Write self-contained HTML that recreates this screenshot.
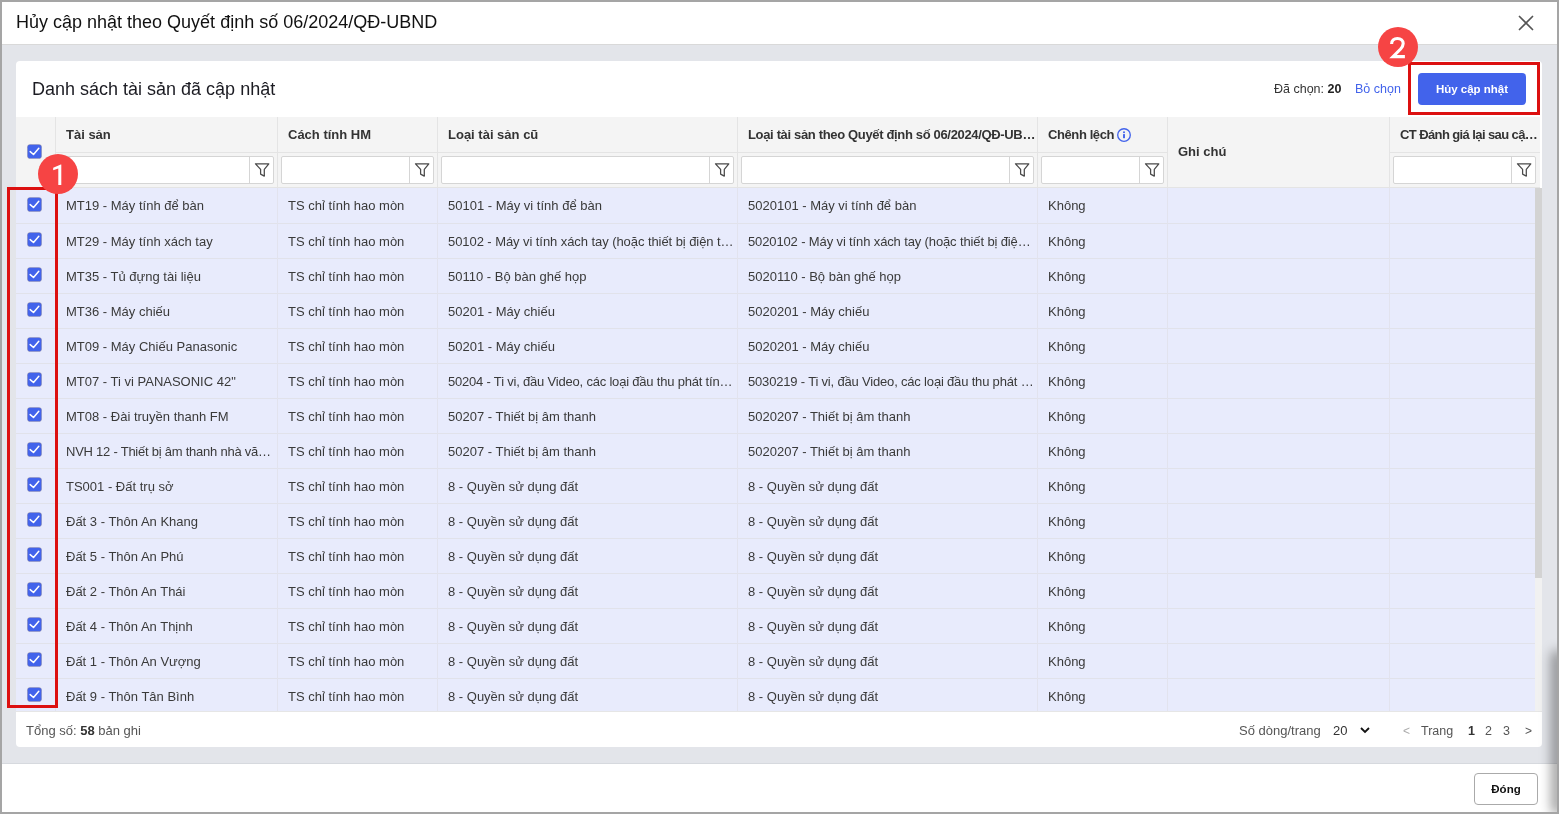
<!DOCTYPE html><html><head><meta charset="utf-8"><style>
*{box-sizing:border-box;margin:0;padding:0}
html,body{width:1559px;height:814px;overflow:hidden}
body{background:#a5a5a5;font-family:"Liberation Sans",sans-serif;position:relative;color:#333}
.a{position:absolute}
#dlg{left:2px;top:2px;width:1555px;height:810px;background:#fff}
#gray{left:2px;top:44px;width:1555px;height:720px;background:#e3e5ea;border-top:1px solid #d9d9d9;border-bottom:1px solid #d6d9de}
.title{left:16px;top:10px;font-size:18px;color:#111;white-space:nowrap;line-height:24px}
#card{left:16px;top:61px;width:1526px;height:686px;background:#fff;border-radius:4px;overflow:hidden}
.ct{font-size:18px;color:#1b1b22;white-space:nowrap;line-height:24px}
.hd{background:#f4f4f4}
.vl{width:1px;background:#e4e4e4}
.hl{height:1px;background:#e4e4e4}
.th{font-size:13px;font-weight:bold;color:#333;white-space:nowrap;line-height:16px}
.inp{height:28px;background:#fff;border:1px solid #d5d5d5;border-radius:2px}
.inp .sep{position:absolute;top:0;bottom:0;width:1px;background:#d5d5d5}
.inp svg{position:absolute;top:3px}
.row{left:16px;width:1519px;height:35px;background:#e8ebfc;border-bottom:1px solid #e1e2ea}
.td{font-size:13px;color:#3a3a3a;white-space:nowrap;line-height:16px}
.cb{width:15px;height:15px}
.ft{font-size:13px;color:#555;white-space:nowrap;line-height:16px}
</style></head><body><div style="position:absolute;left:0;top:0;width:1559px;height:814px;will-change:transform"><div class="a" id="dlg"></div>
<div class="a title">Hủy cập nhật theo Quyết định số 06/2024/QĐ-UBND</div>
<svg class="a" style="left:1518px;top:15px" width="16" height="16" viewBox="0 0 16 16"><path d="M1.5 1.5 L14.5 14.5 M14.5 1.5 L1.5 14.5" stroke="#555" stroke-width="1.7" stroke-linecap="round"/></svg>
<div class="a" id="gray"></div>
<div class="a" id="card"></div>
<div class="a ct" style="left:32px;top:77px">Danh sách tài sản đã cập nhật</div>
<div class="a" style="left:1274px;top:81px;font-size:12.5px;color:#333;white-space:nowrap;line-height:16px">Đã chọn: <b style="color:#222">20</b></div>
<div class="a" style="left:1355px;top:81px;font-size:12.5px;color:#4263eb;white-space:nowrap;line-height:16px">Bỏ chọn</div>
<div class="a" style="left:1418px;top:73px;width:108px;height:32px;background:#4263eb;border-radius:4px;color:#fff;font-size:11.5px;font-weight:bold;text-align:center;line-height:32px;white-space:nowrap">Hủy cập nhật</div>
<div class="a hd" style="left:16px;top:117px;width:1524px;height:71px"></div>
<div class="a hl" style="left:56px;top:152px;width:1111px"></div>
<div class="a hl" style="left:1389px;top:152px;width:151px"></div>
<div class="a hl" style="left:16px;top:187px;width:1524px"></div>
<div class="a vl" style="left:55px;top:117px;height:71px"></div>
<div class="a vl" style="left:277px;top:117px;height:71px"></div>
<div class="a vl" style="left:437px;top:117px;height:71px"></div>
<div class="a vl" style="left:737px;top:117px;height:71px"></div>
<div class="a vl" style="left:1037px;top:117px;height:71px"></div>
<div class="a vl" style="left:1167px;top:117px;height:71px"></div>
<div class="a vl" style="left:1389px;top:117px;height:71px"></div>
<div class="a th" style="left:66px;top:127px;">Tài sản</div>
<div class="a inp" style="left:59px;top:156px;width:215px"><div class="sep" style="left:189px"></div><svg style="left:194px" width="18" height="18" viewBox="0 0 18 18"><path d="M1.5 3.8 L14.8 3.8 L10.3 9.4 L10.3 16.1 L6.6 14.1 L6.6 9.4 Z" fill="none" stroke="#4a4a4a" stroke-width="1.25" stroke-linejoin="round"/></svg></div>
<div class="a th" style="left:288px;top:127px;">Cách tính HM</div>
<div class="a inp" style="left:281px;top:156px;width:153px"><div class="sep" style="left:127px"></div><svg style="left:132px" width="18" height="18" viewBox="0 0 18 18"><path d="M1.5 3.8 L14.8 3.8 L10.3 9.4 L10.3 16.1 L6.6 14.1 L6.6 9.4 Z" fill="none" stroke="#4a4a4a" stroke-width="1.25" stroke-linejoin="round"/></svg></div>
<div class="a th" style="left:448px;top:127px;">Loại tài sản cũ</div>
<div class="a inp" style="left:441px;top:156px;width:293px"><div class="sep" style="left:267px"></div><svg style="left:272px" width="18" height="18" viewBox="0 0 18 18"><path d="M1.5 3.8 L14.8 3.8 L10.3 9.4 L10.3 16.1 L6.6 14.1 L6.6 9.4 Z" fill="none" stroke="#4a4a4a" stroke-width="1.25" stroke-linejoin="round"/></svg></div>
<div class="a th" style="left:748px;top:127px;letter-spacing:-0.34px;">Loại tài sản theo Quyết định số 06/2024/QĐ-UB…</div>
<div class="a inp" style="left:741px;top:156px;width:293px"><div class="sep" style="left:267px"></div><svg style="left:272px" width="18" height="18" viewBox="0 0 18 18"><path d="M1.5 3.8 L14.8 3.8 L10.3 9.4 L10.3 16.1 L6.6 14.1 L6.6 9.4 Z" fill="none" stroke="#4a4a4a" stroke-width="1.25" stroke-linejoin="round"/></svg></div>
<svg class="a" style="left:1117px;top:128px" width="14" height="14" viewBox="0 0 14 14"><circle cx="7" cy="7" r="6.3" fill="none" stroke="#4263eb" stroke-width="1.35"/><rect x="6.05" y="6.1" width="1.9" height="4.1" fill="#4263eb"/><circle cx="7" cy="4.3" r="1" fill="#4263eb"/></svg>
<div class="a th" style="left:1048px;top:127px;letter-spacing:-0.4px;">Chênh lệch</div>
<div class="a inp" style="left:1041px;top:156px;width:123px"><div class="sep" style="left:97px"></div><svg style="left:102px" width="18" height="18" viewBox="0 0 18 18"><path d="M1.5 3.8 L14.8 3.8 L10.3 9.4 L10.3 16.1 L6.6 14.1 L6.6 9.4 Z" fill="none" stroke="#4a4a4a" stroke-width="1.25" stroke-linejoin="round"/></svg></div>
<div class="a th" style="left:1178px;top:144px">Ghi chú</div>
<div class="a th" style="left:1400px;top:127px;letter-spacing:-0.6px;">CT Đánh giá lại sau cậ…</div>
<div class="a inp" style="left:1393px;top:156px;width:143px"><div class="sep" style="left:117px"></div><svg style="left:122px" width="18" height="18" viewBox="0 0 18 18"><path d="M1.5 3.8 L14.8 3.8 L10.3 9.4 L10.3 16.1 L6.6 14.1 L6.6 9.4 Z" fill="none" stroke="#4a4a4a" stroke-width="1.25" stroke-linejoin="round"/></svg></div>
<div class="a cb" style="left:27px;top:144px"><svg width="15" height="15" viewBox="0 0 15 15"><rect x="0.4" y="0.4" width="14.2" height="14.2" rx="2.8" fill="#4263eb" stroke="#9a8a80" stroke-width="0.8" stroke-opacity="0.45"/><path d="M3.2 7.6 L6.5 10.5 L11.8 4.3" fill="none" stroke="#fff" stroke-width="1.5" stroke-linecap="round" stroke-linejoin="round"/></svg></div>
<div class="a" style="left:0;top:188px;width:1559px;height:523px;overflow:hidden">
<div class="a" style="left:16px;top:0;width:1519px;height:1px;background:#e8ebfc"></div>
<div class="a row" style="top:1px"></div>
<div class="a cb" style="left:27px;top:9px"><svg width="15" height="15" viewBox="0 0 15 15"><rect x="0.4" y="0.4" width="14.2" height="14.2" rx="2.8" fill="#4263eb" stroke="#9a8a80" stroke-width="0.8" stroke-opacity="0.45"/><path d="M3.2 7.6 L6.5 10.5 L11.8 4.3" fill="none" stroke="#fff" stroke-width="1.5" stroke-linecap="round" stroke-linejoin="round"/></svg></div>
<div class="a td" style="left:66px;top:10px;">MT19 - Máy tính để bàn</div>
<div class="a td" style="left:288px;top:10px;">TS chỉ tính hao mòn</div>
<div class="a td" style="left:448px;top:10px;">50101 - Máy vi tính để bàn</div>
<div class="a td" style="left:748px;top:10px;">5020101 - Máy vi tính để bàn</div>
<div class="a td" style="left:1048px;top:10px;">Không</div>
<div class="a row" style="top:36px"></div>
<div class="a cb" style="left:27px;top:44px"><svg width="15" height="15" viewBox="0 0 15 15"><rect x="0.4" y="0.4" width="14.2" height="14.2" rx="2.8" fill="#4263eb" stroke="#9a8a80" stroke-width="0.8" stroke-opacity="0.45"/><path d="M3.2 7.6 L6.5 10.5 L11.8 4.3" fill="none" stroke="#fff" stroke-width="1.5" stroke-linecap="round" stroke-linejoin="round"/></svg></div>
<div class="a td" style="left:66px;top:46px;">MT29 - Máy tính xách tay</div>
<div class="a td" style="left:288px;top:46px;">TS chỉ tính hao mòn</div>
<div class="a td" style="left:448px;top:46px;letter-spacing:-0.07px;">50102 - Máy vi tính xách tay (hoặc thiết bị điện t…</div>
<div class="a td" style="left:748px;top:46px;letter-spacing:-0.13px;">5020102 - Máy vi tính xách tay (hoặc thiết bị điệ…</div>
<div class="a td" style="left:1048px;top:46px;">Không</div>
<div class="a row" style="top:71px"></div>
<div class="a cb" style="left:27px;top:79px"><svg width="15" height="15" viewBox="0 0 15 15"><rect x="0.4" y="0.4" width="14.2" height="14.2" rx="2.8" fill="#4263eb" stroke="#9a8a80" stroke-width="0.8" stroke-opacity="0.45"/><path d="M3.2 7.6 L6.5 10.5 L11.8 4.3" fill="none" stroke="#fff" stroke-width="1.5" stroke-linecap="round" stroke-linejoin="round"/></svg></div>
<div class="a td" style="left:66px;top:81px;">MT35 - Tủ đựng tài liệu</div>
<div class="a td" style="left:288px;top:81px;">TS chỉ tính hao mòn</div>
<div class="a td" style="left:448px;top:81px;">50110 - Bộ bàn ghế họp</div>
<div class="a td" style="left:748px;top:81px;">5020110 - Bộ bàn ghế họp</div>
<div class="a td" style="left:1048px;top:81px;">Không</div>
<div class="a row" style="top:106px"></div>
<div class="a cb" style="left:27px;top:114px"><svg width="15" height="15" viewBox="0 0 15 15"><rect x="0.4" y="0.4" width="14.2" height="14.2" rx="2.8" fill="#4263eb" stroke="#9a8a80" stroke-width="0.8" stroke-opacity="0.45"/><path d="M3.2 7.6 L6.5 10.5 L11.8 4.3" fill="none" stroke="#fff" stroke-width="1.5" stroke-linecap="round" stroke-linejoin="round"/></svg></div>
<div class="a td" style="left:66px;top:116px;">MT36 - Máy chiếu</div>
<div class="a td" style="left:288px;top:116px;">TS chỉ tính hao mòn</div>
<div class="a td" style="left:448px;top:116px;">50201 - Máy chiếu</div>
<div class="a td" style="left:748px;top:116px;">5020201 - Máy chiếu</div>
<div class="a td" style="left:1048px;top:116px;">Không</div>
<div class="a row" style="top:141px"></div>
<div class="a cb" style="left:27px;top:149px"><svg width="15" height="15" viewBox="0 0 15 15"><rect x="0.4" y="0.4" width="14.2" height="14.2" rx="2.8" fill="#4263eb" stroke="#9a8a80" stroke-width="0.8" stroke-opacity="0.45"/><path d="M3.2 7.6 L6.5 10.5 L11.8 4.3" fill="none" stroke="#fff" stroke-width="1.5" stroke-linecap="round" stroke-linejoin="round"/></svg></div>
<div class="a td" style="left:66px;top:151px;">MT09 - Máy Chiếu Panasonic</div>
<div class="a td" style="left:288px;top:151px;">TS chỉ tính hao mòn</div>
<div class="a td" style="left:448px;top:151px;">50201 - Máy chiếu</div>
<div class="a td" style="left:748px;top:151px;">5020201 - Máy chiếu</div>
<div class="a td" style="left:1048px;top:151px;">Không</div>
<div class="a row" style="top:176px"></div>
<div class="a cb" style="left:27px;top:184px"><svg width="15" height="15" viewBox="0 0 15 15"><rect x="0.4" y="0.4" width="14.2" height="14.2" rx="2.8" fill="#4263eb" stroke="#9a8a80" stroke-width="0.8" stroke-opacity="0.45"/><path d="M3.2 7.6 L6.5 10.5 L11.8 4.3" fill="none" stroke="#fff" stroke-width="1.5" stroke-linecap="round" stroke-linejoin="round"/></svg></div>
<div class="a td" style="left:66px;top:186px;">MT07 - Ti vi PANASONIC 42"</div>
<div class="a td" style="left:288px;top:186px;">TS chỉ tính hao mòn</div>
<div class="a td" style="left:448px;top:186px;letter-spacing:-0.2px;">50204 - Ti vi, đầu Video, các loại đầu thu phát tín…</div>
<div class="a td" style="left:748px;top:186px;letter-spacing:-0.18px;">5030219 - Ti vi, đầu Video, các loại đầu thu phát …</div>
<div class="a td" style="left:1048px;top:186px;">Không</div>
<div class="a row" style="top:211px"></div>
<div class="a cb" style="left:27px;top:219px"><svg width="15" height="15" viewBox="0 0 15 15"><rect x="0.4" y="0.4" width="14.2" height="14.2" rx="2.8" fill="#4263eb" stroke="#9a8a80" stroke-width="0.8" stroke-opacity="0.45"/><path d="M3.2 7.6 L6.5 10.5 L11.8 4.3" fill="none" stroke="#fff" stroke-width="1.5" stroke-linecap="round" stroke-linejoin="round"/></svg></div>
<div class="a td" style="left:66px;top:221px;">MT08 - Đài truyền thanh FM</div>
<div class="a td" style="left:288px;top:221px;">TS chỉ tính hao mòn</div>
<div class="a td" style="left:448px;top:221px;">50207 - Thiết bị âm thanh</div>
<div class="a td" style="left:748px;top:221px;">5020207 - Thiết bị âm thanh</div>
<div class="a td" style="left:1048px;top:221px;">Không</div>
<div class="a row" style="top:246px"></div>
<div class="a cb" style="left:27px;top:254px"><svg width="15" height="15" viewBox="0 0 15 15"><rect x="0.4" y="0.4" width="14.2" height="14.2" rx="2.8" fill="#4263eb" stroke="#9a8a80" stroke-width="0.8" stroke-opacity="0.45"/><path d="M3.2 7.6 L6.5 10.5 L11.8 4.3" fill="none" stroke="#fff" stroke-width="1.5" stroke-linecap="round" stroke-linejoin="round"/></svg></div>
<div class="a td" style="left:66px;top:256px;letter-spacing:-0.24px;">NVH 12 - Thiết bị âm thanh nhà vă…</div>
<div class="a td" style="left:288px;top:256px;">TS chỉ tính hao mòn</div>
<div class="a td" style="left:448px;top:256px;">50207 - Thiết bị âm thanh</div>
<div class="a td" style="left:748px;top:256px;">5020207 - Thiết bị âm thanh</div>
<div class="a td" style="left:1048px;top:256px;">Không</div>
<div class="a row" style="top:281px"></div>
<div class="a cb" style="left:27px;top:289px"><svg width="15" height="15" viewBox="0 0 15 15"><rect x="0.4" y="0.4" width="14.2" height="14.2" rx="2.8" fill="#4263eb" stroke="#9a8a80" stroke-width="0.8" stroke-opacity="0.45"/><path d="M3.2 7.6 L6.5 10.5 L11.8 4.3" fill="none" stroke="#fff" stroke-width="1.5" stroke-linecap="round" stroke-linejoin="round"/></svg></div>
<div class="a td" style="left:66px;top:291px;">TS001 - Đất trụ sở</div>
<div class="a td" style="left:288px;top:291px;">TS chỉ tính hao mòn</div>
<div class="a td" style="left:448px;top:291px;">8 - Quyền sử dụng đất</div>
<div class="a td" style="left:748px;top:291px;">8 - Quyền sử dụng đất</div>
<div class="a td" style="left:1048px;top:291px;">Không</div>
<div class="a row" style="top:316px"></div>
<div class="a cb" style="left:27px;top:324px"><svg width="15" height="15" viewBox="0 0 15 15"><rect x="0.4" y="0.4" width="14.2" height="14.2" rx="2.8" fill="#4263eb" stroke="#9a8a80" stroke-width="0.8" stroke-opacity="0.45"/><path d="M3.2 7.6 L6.5 10.5 L11.8 4.3" fill="none" stroke="#fff" stroke-width="1.5" stroke-linecap="round" stroke-linejoin="round"/></svg></div>
<div class="a td" style="left:66px;top:326px;">Đất 3 - Thôn An Khang</div>
<div class="a td" style="left:288px;top:326px;">TS chỉ tính hao mòn</div>
<div class="a td" style="left:448px;top:326px;">8 - Quyền sử dụng đất</div>
<div class="a td" style="left:748px;top:326px;">8 - Quyền sử dụng đất</div>
<div class="a td" style="left:1048px;top:326px;">Không</div>
<div class="a row" style="top:351px"></div>
<div class="a cb" style="left:27px;top:359px"><svg width="15" height="15" viewBox="0 0 15 15"><rect x="0.4" y="0.4" width="14.2" height="14.2" rx="2.8" fill="#4263eb" stroke="#9a8a80" stroke-width="0.8" stroke-opacity="0.45"/><path d="M3.2 7.6 L6.5 10.5 L11.8 4.3" fill="none" stroke="#fff" stroke-width="1.5" stroke-linecap="round" stroke-linejoin="round"/></svg></div>
<div class="a td" style="left:66px;top:361px;">Đất 5 - Thôn An Phú</div>
<div class="a td" style="left:288px;top:361px;">TS chỉ tính hao mòn</div>
<div class="a td" style="left:448px;top:361px;">8 - Quyền sử dụng đất</div>
<div class="a td" style="left:748px;top:361px;">8 - Quyền sử dụng đất</div>
<div class="a td" style="left:1048px;top:361px;">Không</div>
<div class="a row" style="top:386px"></div>
<div class="a cb" style="left:27px;top:394px"><svg width="15" height="15" viewBox="0 0 15 15"><rect x="0.4" y="0.4" width="14.2" height="14.2" rx="2.8" fill="#4263eb" stroke="#9a8a80" stroke-width="0.8" stroke-opacity="0.45"/><path d="M3.2 7.6 L6.5 10.5 L11.8 4.3" fill="none" stroke="#fff" stroke-width="1.5" stroke-linecap="round" stroke-linejoin="round"/></svg></div>
<div class="a td" style="left:66px;top:396px;">Đất 2 - Thôn An Thái</div>
<div class="a td" style="left:288px;top:396px;">TS chỉ tính hao mòn</div>
<div class="a td" style="left:448px;top:396px;">8 - Quyền sử dụng đất</div>
<div class="a td" style="left:748px;top:396px;">8 - Quyền sử dụng đất</div>
<div class="a td" style="left:1048px;top:396px;">Không</div>
<div class="a row" style="top:421px"></div>
<div class="a cb" style="left:27px;top:429px"><svg width="15" height="15" viewBox="0 0 15 15"><rect x="0.4" y="0.4" width="14.2" height="14.2" rx="2.8" fill="#4263eb" stroke="#9a8a80" stroke-width="0.8" stroke-opacity="0.45"/><path d="M3.2 7.6 L6.5 10.5 L11.8 4.3" fill="none" stroke="#fff" stroke-width="1.5" stroke-linecap="round" stroke-linejoin="round"/></svg></div>
<div class="a td" style="left:66px;top:431px;">Đất 4 - Thôn An Thịnh</div>
<div class="a td" style="left:288px;top:431px;">TS chỉ tính hao mòn</div>
<div class="a td" style="left:448px;top:431px;">8 - Quyền sử dụng đất</div>
<div class="a td" style="left:748px;top:431px;">8 - Quyền sử dụng đất</div>
<div class="a td" style="left:1048px;top:431px;">Không</div>
<div class="a row" style="top:456px"></div>
<div class="a cb" style="left:27px;top:464px"><svg width="15" height="15" viewBox="0 0 15 15"><rect x="0.4" y="0.4" width="14.2" height="14.2" rx="2.8" fill="#4263eb" stroke="#9a8a80" stroke-width="0.8" stroke-opacity="0.45"/><path d="M3.2 7.6 L6.5 10.5 L11.8 4.3" fill="none" stroke="#fff" stroke-width="1.5" stroke-linecap="round" stroke-linejoin="round"/></svg></div>
<div class="a td" style="left:66px;top:466px;">Đất 1 - Thôn An Vượng</div>
<div class="a td" style="left:288px;top:466px;">TS chỉ tính hao mòn</div>
<div class="a td" style="left:448px;top:466px;">8 - Quyền sử dụng đất</div>
<div class="a td" style="left:748px;top:466px;">8 - Quyền sử dụng đất</div>
<div class="a td" style="left:1048px;top:466px;">Không</div>
<div class="a row" style="top:491px"></div>
<div class="a cb" style="left:27px;top:499px"><svg width="15" height="15" viewBox="0 0 15 15"><rect x="0.4" y="0.4" width="14.2" height="14.2" rx="2.8" fill="#4263eb" stroke="#9a8a80" stroke-width="0.8" stroke-opacity="0.45"/><path d="M3.2 7.6 L6.5 10.5 L11.8 4.3" fill="none" stroke="#fff" stroke-width="1.5" stroke-linecap="round" stroke-linejoin="round"/></svg></div>
<div class="a td" style="left:66px;top:501px;">Đất 9 - Thôn Tân Bình</div>
<div class="a td" style="left:288px;top:501px;">TS chỉ tính hao mòn</div>
<div class="a td" style="left:448px;top:501px;">8 - Quyền sử dụng đất</div>
<div class="a td" style="left:748px;top:501px;">8 - Quyền sử dụng đất</div>
<div class="a td" style="left:1048px;top:501px;">Không</div>
<div class="a vl" style="left:55px;top:0;height:523px;background:#e2e3ee"></div>
<div class="a vl" style="left:277px;top:0;height:523px;background:#e2e3ee"></div>
<div class="a vl" style="left:437px;top:0;height:523px;background:#e2e3ee"></div>
<div class="a vl" style="left:737px;top:0;height:523px;background:#e2e3ee"></div>
<div class="a vl" style="left:1037px;top:0;height:523px;background:#e2e3ee"></div>
<div class="a vl" style="left:1167px;top:0;height:523px;background:#e2e3ee"></div>
<div class="a vl" style="left:1389px;top:0;height:523px;background:#e2e3ee"></div>
</div>
<div class="a" style="left:1535px;top:188px;width:7px;height:523px;background:#f1f1f1"></div>
<div class="a" style="left:1535px;top:188px;width:7px;height:390px;background:#d3d3d3"></div>
<div class="a hl" style="left:16px;top:711px;width:1526px;background:#e6e6e6"></div>
<div class="a ft" style="left:26px;top:723px">Tổng số: <b style="color:#333">58</b> bản ghi</div>
<div class="a ft" style="left:1239px;top:723px">Số dòng/trang</div>
<div class="a ft" style="left:1333px;top:723px;color:#333">20</div>
<svg class="a" style="left:1359px;top:725px" width="12" height="10" viewBox="0 0 12 10"><path d="M2 3 L6 7 L10 3" fill="none" stroke="#111" stroke-width="1.8"/></svg>
<div class="a ft" style="left:1403px;top:723px;color:#aaa;font-size:12px">&lt;</div>
<div class="a ft" style="left:1421px;top:723px;font-size:12.5px">Trang</div>
<div class="a ft" style="left:1468px;top:723px;color:#333;font-weight:bold;font-size:12.5px">1</div>
<div class="a ft" style="left:1485px;top:723px;font-size:12.5px">2</div>
<div class="a ft" style="left:1503px;top:723px;font-size:12.5px">3</div>
<div class="a ft" style="left:1525px;top:723px;font-size:12px">&gt;</div>
<div class="a" style="left:1474px;top:773px;width:64px;height:32px;border:1px solid #aaa;border-radius:4px;background:#fff;font-size:11.5px;font-weight:bold;color:#111;text-align:center;line-height:30px">Đóng</div>
<div class="a" style="left:1530px;top:590px;width:27px;height:222px;overflow:hidden"><div class="a" style="left:21px;top:60px;width:14px;height:165px;border-radius:7px;background:rgba(0,0,0,0.36);filter:blur(6px)"></div></div>
<div class="a" style="left:1408px;top:62px;width:132px;height:53px;border:3px solid #dc1010"></div>
<div class="a" style="left:7px;top:187px;width:51px;height:521px;border:3px solid #dc1010"></div>
<svg class="a" style="left:1378px;top:27px" width="40" height="40" viewBox="0 0 40 40"><circle cx="20" cy="20" r="20" fill="#f64444"/><path d="M13.6 16.9 C13.6 13.6 16.0 11.5 19.4 11.5 C22.9 11.5 25.2 13.7 25.2 16.6 C25.2 18.6 24.3 20.1 22.6 22.0 L15.0 29.6 L26.9 29.6" fill="none" stroke="#fff" stroke-width="3.1" stroke-linejoin="miter"/></svg>
<svg class="a" style="left:38px;top:154px" width="40" height="40" viewBox="0 0 40 40"><circle cx="20" cy="20" r="20" fill="#f64444"/><path d="M23.3 10.5 L23.3 31 L20.3 31 L20.3 14.4 L15.2 16.3 L15.2 13.7 L22.8 10.5 Z" fill="#fff"/></svg></div></body></html>
